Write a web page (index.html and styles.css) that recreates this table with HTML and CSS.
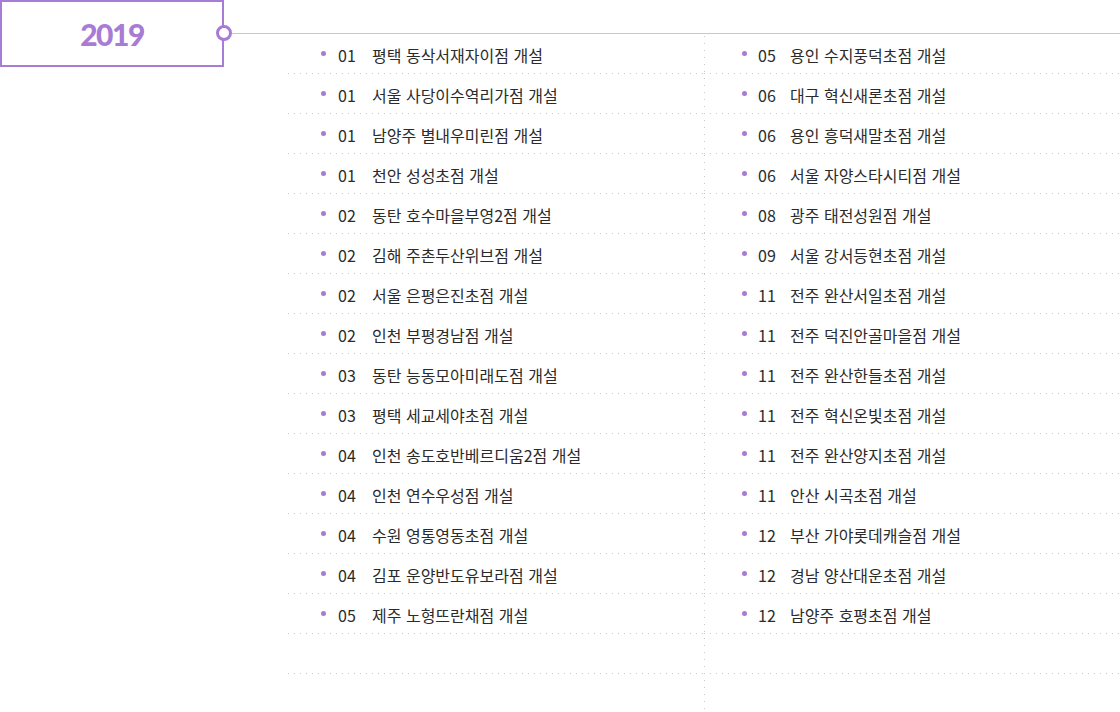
FILE: index.html
```html
<!DOCTYPE html>
<html lang="ko">
<head>
<meta charset="utf-8">
<title>2019</title>
<link rel="stylesheet" href="styles.css">
</head>
<body>
<div class="wrap">
  <div class="year-box"><span class="year">2019</span></div>
  <div class="timeline">
    <ul class="col col-left">
      <li><span class="dot"></span><span class="num">01</span><span class="txt">평택 동삭서재자이점 개설</span></li>
      <li><span class="dot"></span><span class="num">01</span><span class="txt">서울 사당이수역리가점 개설</span></li>
      <li><span class="dot"></span><span class="num">01</span><span class="txt">남양주 별내우미린점 개설</span></li>
      <li><span class="dot"></span><span class="num">01</span><span class="txt">천안 성성초점 개설</span></li>
      <li><span class="dot"></span><span class="num">02</span><span class="txt">동탄 호수마을부영2점 개설</span></li>
      <li><span class="dot"></span><span class="num">02</span><span class="txt">김해 주촌두산위브점 개설</span></li>
      <li><span class="dot"></span><span class="num">02</span><span class="txt">서울 은평은진초점 개설</span></li>
      <li><span class="dot"></span><span class="num">02</span><span class="txt">인천 부평경남점 개설</span></li>
      <li><span class="dot"></span><span class="num">03</span><span class="txt">동탄 능동모아미래도점 개설</span></li>
      <li><span class="dot"></span><span class="num">03</span><span class="txt">평택 세교세야초점 개설</span></li>
      <li><span class="dot"></span><span class="num">04</span><span class="txt">인천 송도호반베르디움2점 개설</span></li>
      <li><span class="dot"></span><span class="num">04</span><span class="txt">인천 연수우성점 개설</span></li>
      <li><span class="dot"></span><span class="num">04</span><span class="txt">수원 영통영동초점 개설</span></li>
      <li><span class="dot"></span><span class="num">04</span><span class="txt">김포 운양반도유보라점 개설</span></li>
      <li><span class="dot"></span><span class="num">05</span><span class="txt">제주 노형뜨란채점 개설</span></li>
      <li class="empty"></li>
    </ul>
    <ul class="col col-right">
      <li><span class="dot"></span><span class="num">05</span><span class="txt">용인 수지풍덕초점 개설</span></li>
      <li><span class="dot"></span><span class="num">06</span><span class="txt">대구 혁신새론초점 개설</span></li>
      <li><span class="dot"></span><span class="num">06</span><span class="txt">용인 흥덕새말초점 개설</span></li>
      <li><span class="dot"></span><span class="num">06</span><span class="txt">서울 자양스타시티점 개설</span></li>
      <li><span class="dot"></span><span class="num">08</span><span class="txt">광주 태전성원점 개설</span></li>
      <li><span class="dot"></span><span class="num">09</span><span class="txt">서울 강서등현초점 개설</span></li>
      <li><span class="dot"></span><span class="num">11</span><span class="txt">전주 완산서일초점 개설</span></li>
      <li><span class="dot"></span><span class="num">11</span><span class="txt">전주 덕진안골마을점 개설</span></li>
      <li><span class="dot"></span><span class="num">11</span><span class="txt">전주 완산한들초점 개설</span></li>
      <li><span class="dot"></span><span class="num">11</span><span class="txt">전주 혁신온빛초점 개설</span></li>
      <li><span class="dot"></span><span class="num">11</span><span class="txt">전주 완산양지초점 개설</span></li>
      <li><span class="dot"></span><span class="num">11</span><span class="txt">안산 시곡초점 개설</span></li>
      <li><span class="dot"></span><span class="num">12</span><span class="txt">부산 가야롯데캐슬점 개설</span></li>
      <li><span class="dot"></span><span class="num">12</span><span class="txt">경남 양산대운초점 개설</span></li>
      <li><span class="dot"></span><span class="num">12</span><span class="txt">남양주 호평초점 개설</span></li>
      <li class="empty"></li>
    </ul>
  </div>
</div>
</body>
</html>
```

FILE: styles.css
```css
html, body {
  margin: 0;
  padding: 0;
  background: #fff;
}

body {
  font-family: "Noto Sans CJK KR", "Noto Sans", sans-serif;
  color: #2b2b2b;
}

.wrap {
  display: flex;
  height: 712px;
  overflow: hidden;
}

.year-box {
  position: relative;
  flex: 0 0 224px;
  height: 67px;
  box-sizing: border-box;
  border: 2px solid #a77bd6;
  display: flex;
  align-items: center;
  justify-content: center;
}

.year-box::after {
  content: "";
  position: absolute;
  right: -10px;
  top: 23px;
  width: 16px;
  height: 16px;
  box-sizing: border-box;
  border: 3px solid #a77bd6;
  border-radius: 50%;
  background: #fff;
  z-index: 2;
}

.year {
  font-family: Lato, "Noto Sans", sans-serif;
  font-weight: 900;
  font-size: 30px;
  letter-spacing: -1.5px;
  color: #a77bd6;
  line-height: 1;
  padding-top: 1px;
}

.timeline {
  flex: 1;
  margin-top: 33px;
  border-top: 1px solid #c8c8c8;
  padding-left: 64px;
  display: grid;
  grid-template-columns: 416px 416px;
}

.col {
  list-style: none;
  margin: 0;
  padding: 0;
}

.col-right {
  background-image: linear-gradient(to bottom, #c8c8c8 1px, transparent 1px);
  background-size: 1px 7px;
  background-repeat: repeat-y;
  background-position: 0 9px;
}

.col li {
  height: 40px;
  box-sizing: border-box;
  display: flex;
  align-items: center;
  font-size: 16px;
  background-image: linear-gradient(to right, #c8c8c8 1px, transparent 1px);
  background-size: 6px 1px;
  background-repeat: repeat-x;
  background-position: 0 bottom;
}

.col-left li {
  padding-left: 33px;
}

.col-right li {
  padding-left: 38px;
}

.dot {
  width: 5px;
  height: 5px;
  border-radius: 50%;
  background: #a77bd6;
  margin-right: 12px;
  margin-top: -1px;
  flex-shrink: 0;
}

.col-right .dot {
  margin-right: 11px;
}

.num {
  width: 34px;
  flex-shrink: 0;
  padding-top: 1px;
}

.col-right .num {
  width: 32px;
}

.txt {
  padding-top: 1px;
  white-space: nowrap;
}
```
